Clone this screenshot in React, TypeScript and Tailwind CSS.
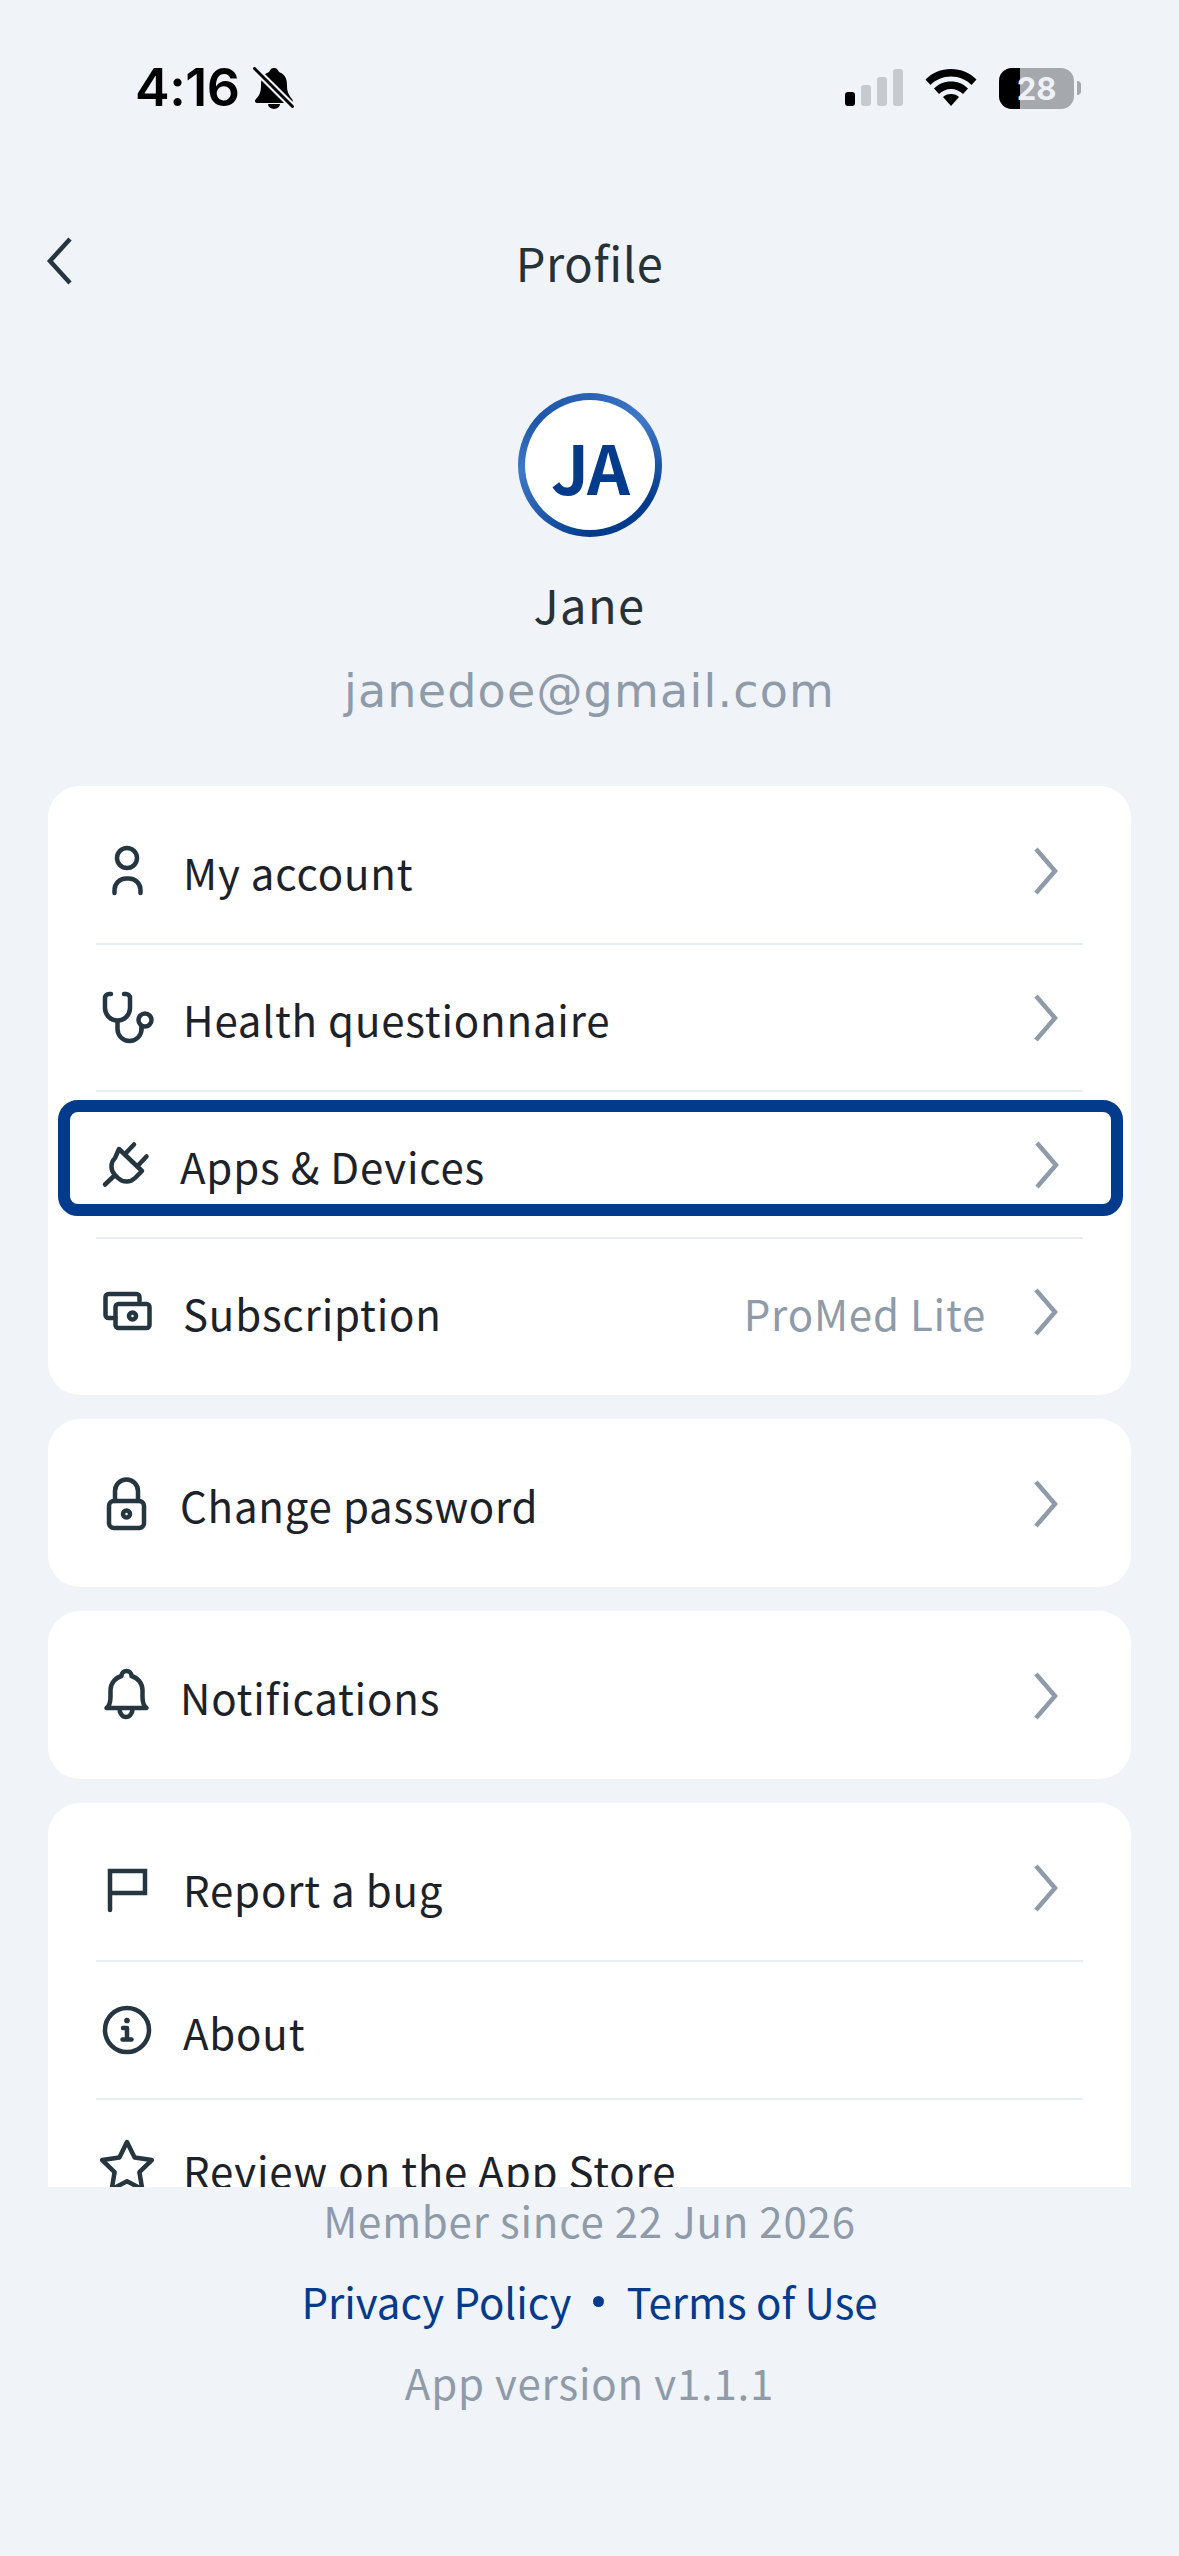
import React from "react";

const DARK = "#263640";

function Slot({ children }: { children: React.ReactNode }) {
  return (
    <svg width="62" height="62" viewBox="0 0 62 62" fill="none" stroke={DARK} strokeWidth="4.5" strokeLinecap="round" strokeLinejoin="round" className="shrink-0">
      {children}
    </svg>
  );
}

const PersonIcon = () => (
  <Slot>
    <circle cx="31" cy="18" r="10" />
    <path d="M18.5 53v-3a11.5 11.5 0 0 1 11.5-11.5h3a11.5 11.5 0 0 1 11.5 11.5v3" />
  </Slot>
);
const StethIcon = () => (
  <Slot>
    <path d="M15 7h-2a4 4 0 0 0-4 4v10a12.5 12.5 0 0 0 25 0V11a4 4 0 0 0-4-4h-2" />
    <path d="M21.5 34v8a12 12 0 0 0 24 0" />
    <path d="M45.5 42v-2" />
    <circle cx="49" cy="33" r="6.5" />
  </Slot>
);
const PlugIcon = () => (
  <Slot>
    <path d="M23 15L46 37l-7 7a12 12 0 0 1-17 0l-3-3a12 12 0 0 1 0-17z" />
    <path d="M29 20l9-9.500M42 31.500l8.500-9M9 50.500l9-8.500" />
  </Slot>
);
const MoneyIcon = () => (
  <Slot>
    <path d="M43.5 20v-4a3 3 0 0 0-3-3h-28a3 3 0 0 0-3 3v18a3 3 0 0 0 3 3h7" />
    <rect x="19.5" y="23" width="34" height="24" rx="3" />
    <circle cx="36.5" cy="35" r="3.5" />
  </Slot>
);
const LockIcon = () => (
  <Slot>
    <rect x="13" y="28" width="35" height="27" rx="5" />
    <path d="M19 28v-10a11.5 11.500 0 0 1 23 0v10" />
    <circle cx="30.5" cy="41" r="3.5" />
  </Slot>
);
const BellIcon = () => (
  <Slot>
    <path d="M10.500 43q4-3 4-11v-7a15 15 0 0 1 11-14a5 5 0 0 1 10 0a15 15 0 0 1 11 14v7q0 8 4 11z" />
    <path d="M23.500 44a6.500 8 0 0 0 13 0" />
  </Slot>
);
const FlagIcon = () => (
  <Slot>
    <path d="M14 53V14h35v22H14" strokeLinejoin="miter" />
  </Slot>
);
const InfoIcon = () => (
  <Slot>
    <circle cx="31" cy="31" r="22" />
    <circle cx="31" cy="21.500" r="1.600" fill={DARK} strokeWidth="2.500" />
    <path d="M27 29h4v11M26.500 40.500h9" />
  </Slot>
);
const StarIcon = () => (
  <Slot>
    <path d="M31 5l7.600 15.600 17.200 2.500-12.400 12.100 2.900 17.100L31 44.200l-15.300 8.100 2.900-17.100L6.200 23.100l17.200-2.500z" />
  </Slot>
);

const Chevron = () => (
  <svg width="26" height="50" viewBox="0 0 26 50" fill="none" stroke="#8f9ba8" strokeWidth="4.500" className="shrink-0">
    <path d="M3 3l19 22-19 22" />
  </svg>
);

function Row({
  icon,
  label,
  right,
  chevron = true,
  ml = "ml-[25px]",
  highlighted = false,
}: {
  icon: React.ReactNode;
  label: string;
  right?: string;
  chevron?: boolean;
  ml?: string;
  highlighted?: boolean;
}) {
  return (
    <div className={highlighted ? "h-[145px] pt-[8px]" : chevron ? "h-[145px] flex items-center" : "h-[136px] flex items-center"}>
      <div
        className={
          highlighted
            ? "h-[116px] ml-[10px] mr-[8px] border-[12px] border-[#023b8c] rounded-[20px] flex items-center"
            : "flex flex-1 items-center"
        }
      >
        <div className={highlighted ? "flex flex-1 items-center pl-[26px] pt-[13px]" : "flex flex-1 items-center pl-[48px]"}>
          {icon}
          <span className={`${ml} pt-[3px] text-[42px] leading-[60px] tracking-[0.8px] text-[#1d2229] whitespace-nowrap`}>{label}</span>
          <div className="flex-1" />
          {right && <span className="pt-[3px] mr-[47px] text-[42px] leading-[60px] tracking-[0.8px] text-[#8f9ba8]">{right}</span>}
          {chevron && (
            <div className={highlighted ? "mr-[51px] flex" : "mr-[72px] flex"}>
              <Chevron />
            </div>
          )}
        </div>
      </div>
    </div>
  );
}

const Divider = () => <div className="h-[2px] mx-[48px] bg-[#e8edf4]" />;

export default function App() {
  return (
    <div className="w-[1179px] h-[2556px] bg-[#f0f4f9] overflow-hidden font-['Noto_Sans_CJK_JP',sans-serif]">
      {/* Status bar */}
      <div className="pt-[54px] h-[122px] flex items-center justify-between pl-[135px] pr-[98px]">
        <div className="flex items-center gap-[14px]">
          <span className="font-['Inter',sans-serif] font-semibold text-[52px] leading-[70px] text-black tracking-[-0.5px]">4:16</span>
          <svg width="42" height="42" viewBox="0 0 42 42" className="shrink-0">
            <path d="M21 1c3 0 4 2 5 4 6 2 8 7 8 13 0 6 1 9 5 14 2 3 0 4-2 4H5c-3 0-4-2-2-4 4-4 5-8 5-14 0-6 2-11 8-13 1-2 2-4 5-4z" fill="#000" />
            <path d="M15 37a6 5 0 0 0 12 0z" fill="#000" />
            <path d="M1 1l39 39" stroke="#f0f4f9" strokeWidth="7" />
            <path d="M1.500 1.500l38 38" stroke="#000" strokeWidth="3" strokeLinecap="round" />
          </svg>
        </div>
        <div className="flex items-center">
          <svg width="58" height="38" viewBox="0 0 58 38" className="shrink-0">
            <rect x="0" y="23" width="10" height="14" rx="3" fill="#000" />
            <rect x="16" y="16" width="10" height="21" rx="3" fill="#c6c9cd" />
            <rect x="32" y="8" width="10" height="29" rx="3" fill="#c6c9cd" />
            <rect x="48" y="0" width="10" height="37" rx="3" fill="#c6c9cd" />
          </svg>
          <svg width="52" height="38" viewBox="0 0 52 38" className="ml-[22px] shrink-0">
            <path d="M26 0c10 0 19 4 25.500 10.500l-5 5.500C41 10.500 34 7.500 26 7.500S11 10.500 5.500 16L.5 10.500C7 4 16 0 26 0z" fill="#000" />
            <path d="M26 12.500c7 0 12.500 2.500 17 7l-5 5.500c-3-3-7.500-5-12-5s-9 2-12 5l-5-5.500c4.500-4.500 10-7 17-7z" fill="#000" />
            <path d="M26 25c3.500 0 6 1 8 3L26 37l-8-9c2-2 4.500-3 8-3z" fill="#000" />
          </svg>
          <div className="relative ml-[22px] w-[75px] h-[41px] rounded-[13px] bg-[#a5a8ad] overflow-hidden flex items-center justify-center">
            <div className="absolute left-0 top-0 bottom-0 w-[21px] bg-black" />
            <span className="relative font-['Inter',sans-serif] font-bold text-[31px] leading-[41px] text-[#eef1f6]">28</span>
          </div>
          <div className="ml-[3px] w-[4px] h-[14px] rounded-r-full bg-[#a5a8ad]" />
        </div>
      </div>

      {/* Header */}
      <div className="relative mt-[97px] h-[90px] flex items-center justify-center">
        <svg width="28" height="50" viewBox="0 0 28 50" fill="none" stroke={DARK} strokeWidth="4.500" className="absolute left-[46px] top-[17px]">
          <path d="M24 3L4 25l20 22" />
        </svg>
        <span className="-mt-[4px] text-[47px] leading-[60px] font-normal tracking-[0.6px] text-[#263238]">Profile</span>
      </div>

      {/* Identity */}
      <div className="flex flex-col items-center">
        <div className="mt-[84px] w-[144px] h-[144px] rounded-full p-[7px] bg-[conic-gradient(from_0deg,#2a62b4_0deg,#4079c9_50deg,#023b8c_120deg,#023b8c_180deg,#1e56a8_220deg,#4079c9_265deg,#1e56a8_310deg,#2a62b4_360deg)]">
          <div className="w-full h-full rounded-full bg-white flex items-center justify-center text-[67px] font-bold leading-none tracking-[-2px] text-[#023b8c]">JA</div>
        </div>
        <div className="mt-[37px] h-[60px] flex items-center text-[47px] font-normal tracking-[1.4px] text-[#263238]">Jane</div>
        <div className="mt-[27px] h-[60px] flex items-center font-['DejaVu_Sans',sans-serif] text-[46px] tracking-[1.2px] text-[#8f9ba8]">janedoe@gmail.com</div>
      </div>

      {/* Cards */}
      <div className="mt-[65px] mx-[48px] h-[1401px] overflow-hidden flex flex-col gap-[24px]">
        <div className="bg-white rounded-[32px] pt-[12px] pb-[11px] shrink-0">
          <Row icon={<PersonIcon />} label="My account" />
          <Divider />
          <Row icon={<StethIcon />} label="Health questionnaire" />
          <Divider />
          <Row icon={<PlugIcon />} label="Apps & Devices" ml="ml-[22px]" highlighted />
          <Divider />
          <Row icon={<MoneyIcon />} label="Subscription" right="ProMed Lite" />
        </div>
        <div className="bg-white rounded-[32px] pt-[12px] pb-[11px] shrink-0">
          <Row icon={<LockIcon />} label="Change password" ml="ml-[22px]" />
        </div>
        <div className="bg-white rounded-[32px] pt-[12px] pb-[11px] shrink-0">
          <Row icon={<BellIcon />} label="Notifications" ml="ml-[22px]" />
        </div>
        <div className="bg-white rounded-t-[32px] pt-[12px] shrink-0">
          <Row icon={<FlagIcon />} label="Report a bug" />
          <Divider />
          <Row icon={<InfoIcon />} label="About" chevron={false} />
          <Divider />
          <Row icon={<StarIcon />} label="Review on the App Store" chevron={false} />
        </div>
      </div>

      {/* Footer */}
      <div className="mt-[3px] flex flex-col items-center gap-[21px] text-[42px] leading-[60px] tracking-[0.8px]">
        <div className="text-[#8f9ba8]">Member since 22 Jun 2026</div>
        <div className="flex items-center tracking-normal text-[#023b8c]">
          <span>Privacy Policy</span>
          <span className="mx-[22px] w-[11px] h-[11px] rounded-full bg-[#023b8c]" />
          <span>Terms of Use</span>
        </div>
        <div className="text-[#8f9ba8]">App version v1.1.1</div>
      </div>
    </div>
  );
}
